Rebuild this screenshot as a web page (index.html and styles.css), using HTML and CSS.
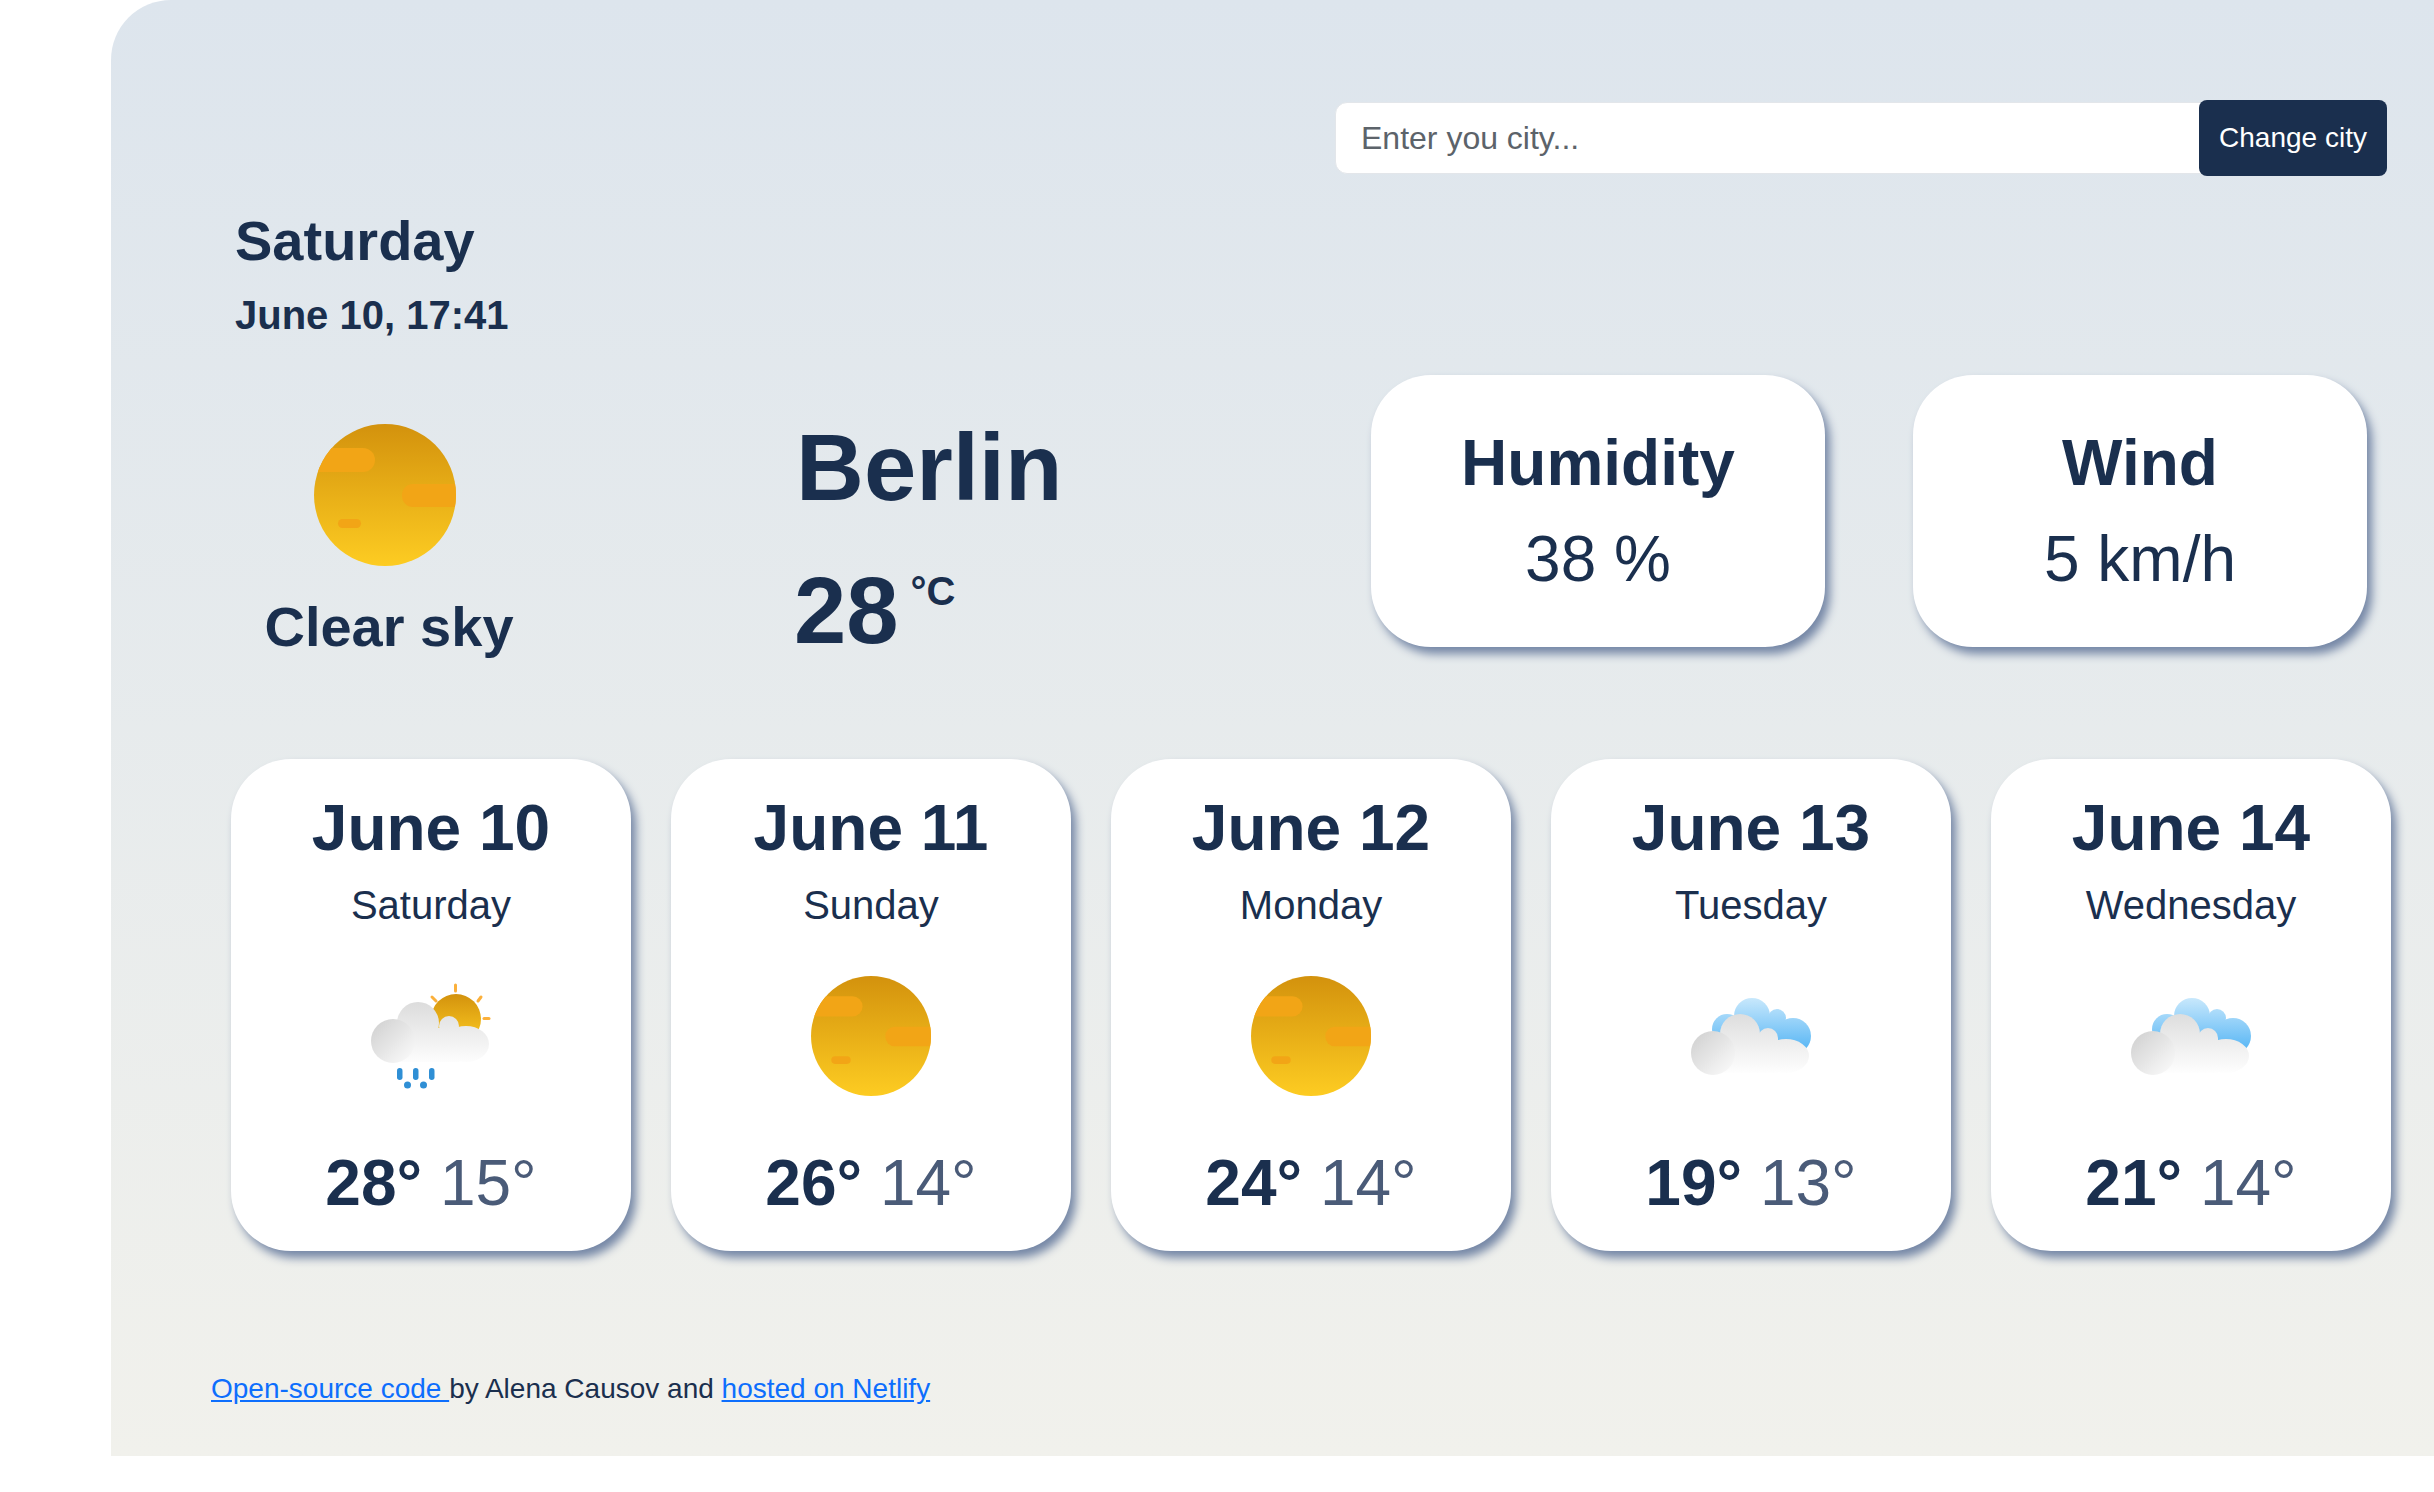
FILE: index.html
```html
<!DOCTYPE html>
<html lang="en">
<head>
  <meta charset="UTF-8" />
  <title>Weather App</title>
  <link rel="stylesheet" href="styles.css">
</head>
<body>
  <svg class="icon-defs" width="0" height="0">
    <defs>
      <linearGradient id="sunGrad" x1="0" y1="0" x2="0" y2="1">
        <stop offset="0" stop-color="#d3920d" />
        <stop offset="1" stop-color="#fdcc22" />
      </linearGradient>
      <linearGradient id="cloudGrad" gradientUnits="userSpaceOnUse" x1="0" y1="26" x2="0" y2="90">
        <stop offset="0" stop-color="#dcdcdc" />
        <stop offset="1" stop-color="#ffffff" />
      </linearGradient>
      <linearGradient id="puffGrad" x1="0" y1="0" x2="1" y2="1">
        <stop offset="0" stop-color="#cecece" />
        <stop offset="1" stop-color="#fdfdfd" />
      </linearGradient>
      <linearGradient id="blueGrad" gradientUnits="userSpaceOnUse" x1="0" y1="22" x2="0" y2="78">
        <stop offset="0" stop-color="#c8e8fc" />
        <stop offset="1" stop-color="#4fb2f4" />
      </linearGradient>
      <clipPath id="sunClip"><circle cx="71" cy="71" r="71" /></clipPath>
      <symbol id="clear" viewBox="0 0 142 142">
        <circle cx="71" cy="71" r="71" fill="url(#sunGrad)" />
        <g clip-path="url(#sunClip)" fill="#f2a516">
          <rect x="-10" y="24" width="71" height="24" rx="12" />
          <rect x="88" y="60" width="72" height="23" rx="11" />
          <rect x="24" y="95" width="23" height="9" rx="4.5" />
        </g>
      </symbol>
      <symbol id="rain" viewBox="0 0 120 120">
        <g stroke="#fbb03b" stroke-width="3" stroke-linecap="round">
          <line x1="84.5" y1="9" x2="84.5" y2="15" />
          <line x1="107" y1="25" x2="110" y2="21" />
          <line x1="113" y1="42.5" x2="118" y2="42.5" />
          <line x1="61" y1="21" x2="65" y2="25" />
        </g>
        <circle cx="85" cy="43" r="25" fill="url(#sunGrad)" />
        <g fill="url(#cloudGrad)">
          <circle cx="47" cy="47" r="21" />
          <circle cx="78" cy="50" r="10" />
          <ellipse cx="95" cy="68" rx="23" ry="18" />
          <rect x="22" y="52" width="66" height="34" />
        </g>
        <circle cx="22" cy="65" r="22" fill="url(#puffGrad)" />
        <g fill="#2f8fd5">
          <rect x="26" y="92" width="5.5" height="12" rx="2.7" />
          <rect x="42" y="92" width="5.5" height="12" rx="2.7" />
          <rect x="58" y="92" width="5.5" height="12" rx="2.7" />
          <circle cx="36.5" cy="109" r="3.5" />
          <circle cx="52.5" cy="109" r="3.5" />
        </g>
      </symbol>
      <symbol id="clouds" viewBox="0 0 120 120">
        <g fill="url(#blueGrad)">
          <circle cx="61" cy="40" r="18" />
          <circle cx="36" cy="53" r="15" />
          <circle cx="86" cy="42" r="9" />
          <circle cx="102" cy="60" r="18" />
          <rect x="36" y="45" width="66" height="30" />
        </g>
        <g fill="url(#cloudGrad)" transform="translate(0 9)">
          <circle cx="49" cy="49" r="20" />
          <circle cx="77" cy="53" r="10" />
          <ellipse cx="95" cy="71" rx="23" ry="17" />
          <rect x="21" y="53" width="66" height="35" />
        </g>
        <circle cx="22" cy="77" r="22" fill="url(#puffGrad)" />
      </symbol>
    </defs>
  </svg>

  <main class="app">
    <form class="search">
      <input class="search-input" type="text" placeholder="Enter you city..." />
      <button class="search-btn" type="button">Change city</button>
    </form>

    <div class="date-block">
      <h2 class="day-name">Saturday</h2>
      <p class="date-time">June 10, 17:41</p>
    </div>

    <section class="current">
      <div class="condition">
        <svg class="sun-big"><use href="#clear" /></svg>
        <p class="condition-text">Clear sky</p>
      </div>
      <div class="city">
        <h1 class="city-name">Berlin</h1>
        <div class="temp"><span class="temp-value">28</span><span class="temp-unit">°C</span></div>
      </div>
      <div class="stat">
        <h3 class="stat-label">Humidity</h3>
        <p class="stat-value">38 %</p>
      </div>
      <div class="stat">
        <h3 class="stat-label">Wind</h3>
        <p class="stat-value">5 km/h</p>
      </div>
    </section>

    <section class="forecast">
      <div class="card">
        <h3 class="card-date">June 10</h3>
        <p class="card-day">Saturday</p>
        <svg class="card-icon"><use href="#rain" /></svg>
        <p class="card-temp"><strong>28°</strong> <span>15°</span></p>
      </div>
      <div class="card">
        <h3 class="card-date">June 11</h3>
        <p class="card-day">Sunday</p>
        <svg class="card-icon"><use href="#clear" /></svg>
        <p class="card-temp"><strong>26°</strong> <span>14°</span></p>
      </div>
      <div class="card">
        <h3 class="card-date">June 12</h3>
        <p class="card-day">Monday</p>
        <svg class="card-icon"><use href="#clear" /></svg>
        <p class="card-temp"><strong>24°</strong> <span>14°</span></p>
      </div>
      <div class="card">
        <h3 class="card-date">June 13</h3>
        <p class="card-day">Tuesday</p>
        <svg class="card-icon"><use href="#clouds" /></svg>
        <p class="card-temp"><strong>19°</strong> <span>13°</span></p>
      </div>
      <div class="card">
        <h3 class="card-date">June 14</h3>
        <p class="card-day">Wednesday</p>
        <svg class="card-icon"><use href="#clouds" /></svg>
        <p class="card-temp"><strong>21°</strong> <span>14°</span></p>
      </div>
    </section>

    <footer class="credit">
      <a href="#">Open-source code </a>by Alena Causov and <a href="#">hosted on Netlify</a>
    </footer>
  </main>
</body>
</html>
```

FILE: styles.css
```css
* {
  box-sizing: border-box;
}
body {
  margin: 0;
  background: #fff;
  color: #1a2f4e;
  font-family: "Liberation Sans", Arial, sans-serif;
  overflow: hidden;
}
h1, h2, h3, p {
  margin: 0;
}
.icon-defs {
  display: block;
  height: 0;
}
.app {
  margin-left: 111px;
  height: 1456px;
  padding-top: 100px;
  border-top-left-radius: 60px;
  background: linear-gradient(180deg, #dde5ed, #f1f1ec);
}
.search {
  display: flex;
  align-items: center;
  justify-content: flex-end;
  padding-right: 47px;
}
.search-input {
  width: 866px;
  height: 72px;
  margin-right: -2px;
  padding: 0 25px;
  border: 1px solid #e3e6ea;
  border-radius: 12px 0 0 12px;
  background: #fff;
  color: #1a2f4e;
  font: 32px "Liberation Sans", Arial, sans-serif;
}
.search-input::placeholder {
  color: #5c636a;
  opacity: 1;
}
.search-btn {
  position: relative;
  width: 188px;
  height: 76px;
  padding: 0;
  border: 0;
  border-radius: 8px;
  background: #1a2f4e;
  color: #fff;
  font: 28px "Liberation Sans", Arial, sans-serif;
}
.date-block {
  margin-left: 124px;
  margin-top: 30px;
}
.day-name {
  font-size: 56px;
  line-height: 70px;
}
.date-time {
  margin-top: 9px;
  font-size: 40px;
  font-weight: bold;
  line-height: 60px;
}
.current {
  display: flex;
  align-items: flex-start;
  margin-top: 30px;
}
.condition {
  flex: 0 0 320px;
  margin-left: 120px;
  text-align: center;
}
.sun-big {
  display: block;
  width: 142px;
  height: 142px;
  margin: 49px 0 0 83px;
}
.condition-text {
  margin-top: 26px;
  padding-right: 4px;
  font-size: 56px;
  font-weight: bold;
  line-height: 70px;
}
.city {
  flex: 0 0 575px;
  margin-left: 245px;
  padding-top: 33px;
}
.city-name {
  font-size: 94px;
  line-height: 120px;
}
.temp {
  display: flex;
  align-items: flex-start;
  margin-top: 28px;
  margin-left: -2px;
}
.temp-value {
  font-size: 94px;
  font-weight: bold;
  line-height: 110px;
}
.temp-unit {
  margin-top: 5px;
  margin-left: 12px;
  font-size: 40px;
  font-weight: bold;
  line-height: 60px;
}
.stat {
  flex: 0 0 454px;
  height: 272px;
  padding-top: 48px;
  border-radius: 60px;
  background: #fff;
  box-shadow: 5px 7px 10px #7587a6;
  text-align: center;
}
.stat + .stat {
  margin-left: 88px;
}
.stat-label {
  font-size: 64px;
  line-height: 80px;
}
.stat-value {
  margin-top: 16px;
  font-size: 64px;
  line-height: 80px;
}
.forecast {
  display: flex;
  gap: 40px;
  margin-top: 93px;
  margin-left: 120px;
}
.card {
  flex: 0 0 400px;
  height: 492px;
  padding-top: 29px;
  border-radius: 60px;
  background: #fff;
  box-shadow: 5px 7px 10px #7587a6;
  text-align: center;
}
.card-date {
  font-size: 64px;
  line-height: 80px;
}
.card-day {
  margin-top: 7px;
  font-size: 40px;
  line-height: 60px;
}
.card-icon {
  display: block;
  width: 120px;
  height: 120px;
  margin: 41px auto 0;
  filter: blur(0.6px);
}
.card-temp {
  margin-top: 47px;
  font-size: 64px;
  line-height: 80px;
}
.card-temp span {
  color: #4a5b78;
}
.credit {
  margin-top: 117px;
  margin-left: 100px;
  font-size: 28px;
  line-height: 42px;
}
.credit a {
  color: #0d6efd;
}
```
